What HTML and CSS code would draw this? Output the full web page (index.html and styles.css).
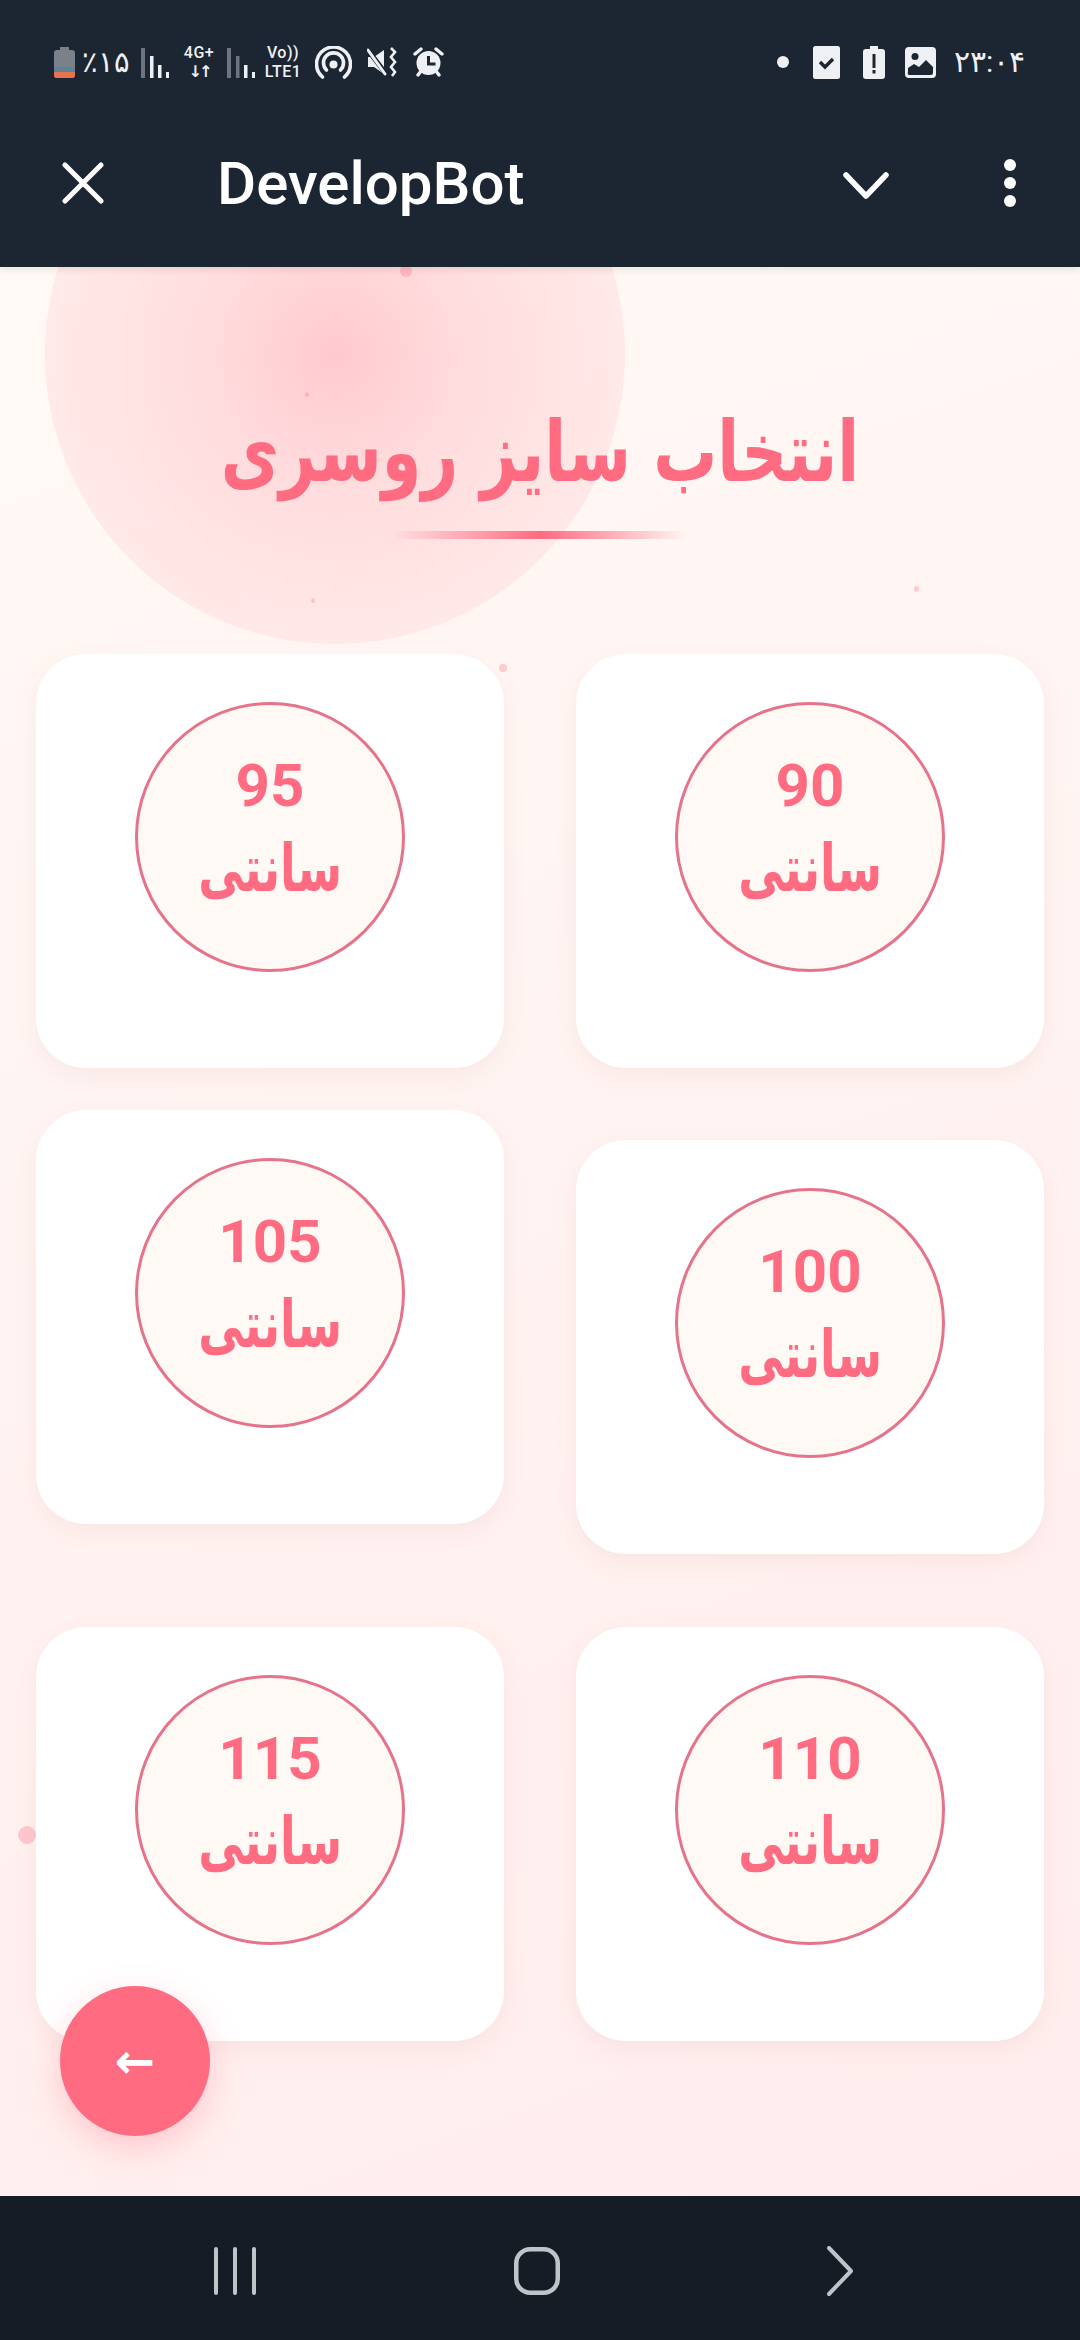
FILE: index.html
```html
<!DOCTYPE html>
<html lang="fa">
<head>
    <meta charset="UTF-8">
    <meta name="viewport" content="width=device-width, initial-scale=1.0">
    <title>DevelopBot</title>
    <link rel="stylesheet" href="styles.css">
</head>
<body>
    <header class="top">
        <div class="status">
            <div class="status-left">
                <svg class="i-batt" width="21" height="31" viewBox="0 0 21 31"><path d="M6 0h9v3h3a3 3 0 0 1 3 3v22a3 3 0 0 1-3 3H3a3 3 0 0 1-3-3V6a3 3 0 0 1 3-3h3z" fill="#7b818b"/><path d="M0 25h21v3a3 3 0 0 1-3 3H3a3 3 0 0 1-3-3z" fill="#e8744f"/><rect y="20" width="21" height="5" fill="#5f8296"/></svg>
                <span class="pct" dir="ltr">٪۱۵</span>
                <svg class="i-sig" width="28" height="31" viewBox="0 0 28 31"><rect x="0" y="1" width="4" height="30" fill="#6f7580"/><rect x="9" y="9" width="3.500" height="22" fill="#eef0f4"/><rect x="17" y="18" width="3.500" height="13" fill="#eef0f4"/><rect x="25" y="25" width="3.500" height="6" fill="#eef0f4"/></svg>
                <div class="net">
                    <span>4G+</span>
                    <span class="arrows">↓↑</span>
                </div>
                <svg class="i-sig2" width="28" height="31" viewBox="0 0 28 31"><rect x="0" y="1" width="4" height="30" fill="#6f7580"/><rect x="9" y="9" width="3.500" height="22" fill="#6f7580"/><rect x="17" y="18" width="3.500" height="13" fill="#eef0f4"/><rect x="25" y="25" width="3.500" height="6" fill="#eef0f4"/></svg>
                <div class="net volte">
                    <span>Vo))</span>
                    <span>LTE1</span>
                </div>
                <svg class="i-hot" width="37" height="33" viewBox="0 0 37 33" fill="none" stroke="#eef0f4" stroke-width="3.600" stroke-linecap="round"><path d="M7.500 31A17 17 0 1 1 29.500 31"/><path d="M11.500 24A10 10 0 1 1 25.500 24"/><circle cx="18.500" cy="18.500" r="4" fill="#eef0f4" stroke="none"/></svg>
                <svg class="i-mute" width="31" height="30" viewBox="0 0 31 30"><path d="M1 10h6L17 3v24L7 20H1z" fill="#eef0f4"/><path d="M0 2l20 26" stroke="#1c2532" stroke-width="5"/><path d="M1 3l17 24" stroke="#eef0f4" stroke-width="3" stroke-linecap="round"/><path d="M24 1l4 4-4 5 4 5-4 5 4 5-3 4" fill="none" stroke="#eef0f4" stroke-width="2.600"/></svg>
                <svg class="i-alarm" width="31" height="30" viewBox="0 0 31 30"><circle cx="15.500" cy="16" r="12" fill="#eef0f4"/><path d="M15.500 9v8h7" fill="none" stroke="#1c2532" stroke-width="3"/><path d="M2 7l6-5M29 7l-6-5M5 28l3-4M26 28l-3-4" stroke="#eef0f4" stroke-width="3.400" stroke-linecap="round"/></svg>
            </div>
            <div class="status-right">
                <span class="dot"></span>
                <svg class="i-check" width="27" height="33" viewBox="0 0 27 33"><rect width="27" height="33" rx="2.500" fill="#eef0f4"/><path d="M7 16l5 5 8-8" fill="none" stroke="#1c2532" stroke-width="3.400"/></svg>
                <svg class="i-alert" width="22" height="33" viewBox="0 0 22 33"><path d="M7 0h8v3h4a3 3 0 0 1 3 3v24a3 3 0 0 1-3 3H3a3 3 0 0 1-3-3V6a3 3 0 0 1 3-3h4z" fill="#eef0f4"/><rect x="9.500" y="8" width="3" height="14" fill="#1c2532"/><rect x="9.500" y="24" width="3" height="3.500" fill="#1c2532"/></svg>
                <svg class="i-img" width="31" height="31" viewBox="0 0 31 31"><rect width="31" height="31" rx="4" fill="#eef0f4"/><circle cx="10" cy="9.500" r="3.500" fill="#1c2532"/><path d="M3 25v-4l6-4 5 3 7-7 7 7v6a2 2 0 0 1-2 2H5a2 2 0 0 1-2-3z" fill="#1c2532"/></svg>
                <span class="clock" dir="ltr">۲۳:۰۴</span>
            </div>
        </div>
        <div class="appbar">
            <svg class="i-close" width="42" height="42" viewBox="0 0 42 42" fill="none" stroke="#fff" stroke-width="5" stroke-linecap="round"><path d="M3 3l36 36M39 3L3 39"/></svg>
            <span class="app-title">DevelopBot</span>
            <svg class="i-down" width="46" height="28" viewBox="0 0 46 28" fill="none" stroke="#fff" stroke-width="5.500" stroke-linecap="round" stroke-linejoin="round"><path d="M3 3l20 21L43 3"/></svg>
            <div class="kebab"><span></span><span></span><span></span></div>
        </div>
    </header>

    <main class="page">
        <div class="blob"></div>
        <span class="speck s1"></span>
        <span class="speck s2"></span>
        <span class="speck s3"></span>
        <span class="speck s4"></span>
        <span class="speck s5"></span>
        <span class="speck s6"></span>

        <h1 class="heading">انتخاب سایز روسری</h1>
        <div class="rule"></div>

        <div class="sizes">
            <div class="col col-a">
                <div class="card"><div class="ring"><span class="num">95</span><span class="unit">سانتی</span></div></div>
                <div class="card"><div class="ring"><span class="num">105</span><span class="unit">سانتی</span></div></div>
                <div class="card"><div class="ring"><span class="num">115</span><span class="unit">سانتی</span></div></div>
            </div>
            <div class="col col-b">
                <div class="card"><div class="ring"><span class="num">90</span><span class="unit">سانتی</span></div></div>
                <div class="card"><div class="ring"><span class="num">100</span><span class="unit">سانتی</span></div></div>
                <div class="card"><div class="ring"><span class="num">110</span><span class="unit">سانتی</span></div></div>
            </div>
        </div>

        <button class="back" type="button">←</button>
    </main>

    <nav class="navbar">
        <svg width="42" height="48" viewBox="0 0 42 48" stroke="#c0c4c9" stroke-width="4" stroke-linecap="round"><path d="M2 2v44M21 2v44M40 2v44"/></svg>
        <svg width="46" height="48" viewBox="0 0 46 48" fill="none" stroke="#c0c4c9" stroke-width="4.500"><rect x="2.250" y="2.250" width="41.500" height="43.500" rx="14"/></svg>
        <svg width="26" height="50" viewBox="0 0 26 50" fill="none" stroke="#c0c4c9" stroke-width="4" stroke-linecap="round" stroke-linejoin="round"><path d="M2 2l22 23L2 48"/></svg>
    </nav>
</body>
</html>
```

FILE: styles.css
```css
* {
    box-sizing: border-box;
}
html, body {
    margin: 0;
    padding: 0;
}
body {
    width: 1080px;
    height: 2340px;
    display: flex;
    flex-direction: column;
    overflow: hidden;
    font-family: Roboto, "Noto Sans", sans-serif;
    background-color: #151c26;
}

/* top bars */
.top {
    height: 267px;
    flex: none;
    background-color: #1c2532;
    color: #fff;
    position: relative;
    z-index: 2;
    box-shadow: 0 2px 8px rgba(0, 0, 0, 0.1);
}
.status {
    height: 124px;
    display: flex;
    justify-content: space-between;
    align-items: center;
    padding: 0 54px 0 54px;
    color: #eef0f4;
}
.status-left, .status-right {
    display: flex;
    align-items: center;
}
.pct {
    width: 44px;
    margin-left: 7px;
    font-size: 29px;
    line-height: 32px;
    white-space: nowrap;
}
.i-sig { margin-left: 15px; }
.net {
    width: 34px;
    margin-left: 13px;
    display: flex;
    flex-direction: column;
    align-items: center;
    font-size: 16px;
    font-weight: 500;
    line-height: 19px;
    letter-spacing: 0.5px;
    white-space: nowrap;
}
.arrows {
    font-family: "DejaVu Sans", sans-serif;
    font-size: 16px;
    font-weight: 700;
    letter-spacing: -3px;
}
.i-sig2 { margin-left: 11px; }
.volte {
    width: 38px;
    margin-left: 9px;
}
.i-hot { margin-left: 13px; }
.i-mute { margin-left: 15px; }
.i-alarm { margin-left: 15px; }
.dot {
    width: 12px;
    height: 12px;
    border-radius: 50%;
    background-color: #eef0f4;
}
.i-check { margin-left: 24px; }
.i-alert { margin-left: 23px; }
.i-img { margin-left: 20px; }
.clock {
    width: 72px;
    margin-left: 18px;
    font-size: 30px;
    line-height: 32px;
    white-space: nowrap;
}
.appbar {
    height: 118px;
    display: flex;
    align-items: center;
    padding: 0 64px 0 62px;
}
.app-title {
    margin-left: 113px;
    font-size: 60px;
    font-weight: 500;
}
.i-down {
    margin-left: auto;
    margin-top: 6px;
}
.kebab {
    margin-left: 115px;
    display: flex;
    flex-direction: column;
    gap: 6px;
}
.kebab span {
    width: 12px;
    height: 12px;
    border-radius: 50%;
    background-color: #fff;
}

/* main area */
.page {
    flex: 1;
    position: relative;
    overflow: hidden;
    padding: 0 36px;
    background: linear-gradient(160deg, #fff9f5 0%, #fff3f1 50%, #ffeded 100%);
}
.blob {
    position: absolute;
    left: 45px;
    top: -203px;
    width: 580px;
    height: 580px;
    border-radius: 50%;
    background: radial-gradient(circle, rgba(255, 107, 129, 0.33) 0%, rgba(255, 107, 129, 0.2) 30%, rgba(255, 107, 129, 0.1) 70%, rgba(255, 107, 129, 0.05) 100%);
}
.speck {
    position: absolute;
    border-radius: 50%;
    background-color: rgba(255, 107, 129, 0.3);
}
.s1 { left: 400px; top: -2px; width: 12px; height: 12px; }
.s2 { left: 18px; top: 1559px; width: 18px; height: 18px; }
.s3 { left: 499px; top: 397px; width: 8px; height: 8px; }
.s4 { left: 914px; top: 319px; width: 5px; height: 6px; }
.s5 { left: 305px; top: 125px; width: 4px; height: 5px; }
.s6 { left: 311px; top: 331px; width: 4px; height: 5px; }

.heading {
    position: relative;
    margin: 0;
    padding-top: 140px;
    height: 258px;
    text-align: center;
    color: #ff6b81;
    font-family: "DejaVu Sans", sans-serif;
    font-size: 84px;
    font-weight: 700;
    line-height: 90px;
    transform: scaleX(0.76);
    white-space: nowrap;
}
.rule {
    position: relative;
    width: 296px;
    height: 8px;
    margin: 6px auto 0;
    border-radius: 4px;
    background: linear-gradient(90deg, rgba(255, 107, 129, 0), #ff6b81, rgba(255, 107, 129, 0));
}

.sizes {
    position: relative;
    margin-top: 115px;
    display: flex;
    justify-content: space-between;
}
.col {
    width: 468px;
    display: flex;
    flex-direction: column;
}
.col-a .card:nth-child(2) { margin-top: 42px; }
.col-a .card:nth-child(3) { margin-top: 103px; }
.col-b .card:nth-child(2) { margin-top: 72px; }
.col-b .card:nth-child(3) { margin-top: 73px; }
.card {
    height: 414px;
    padding-top: 48px;
    display: flex;
    justify-content: center;
    align-items: flex-start;
    border-radius: 50px;
    background-color: #fff;
    box-shadow: 0 8px 24px rgba(160, 90, 90, 0.08);
}
.ring {
    width: 270px;
    height: 270px;
    display: flex;
    flex-direction: column;
    align-items: center;
    padding-top: 45px;
    border: 3px solid #e5748b;
    border-radius: 50%;
    background-color: #fff9f6;
    color: #ff6b81;
    font-weight: 700;
}
.num {
    font-size: 60px;
    line-height: 72px;
}
.unit {
    margin-top: 2px;
    font-family: "DejaVu Sans", sans-serif;
    font-size: 66px;
    line-height: 90px;
    transform: scaleX(0.69);
}
.back {
    position: absolute;
    left: 60px;
    top: 1719px;
    width: 150px;
    height: 150px;
    padding: 0;
    border: none;
    border-radius: 50%;
    background-color: #ff6b81;
    color: #fff;
    font-family: "DejaVu Sans", sans-serif;
    font-size: 48px;
    font-weight: 700;
    box-shadow: 0 12px 34px rgba(255, 107, 129, 0.3);
}

/* system nav */
.navbar {
    height: 144px;
    flex: none;
    display: flex;
    align-items: center;
    padding: 6px 0 0 214px;
    background-color: #151c26;
}
.navbar svg:nth-child(2) { margin-left: 258px; }
.navbar svg:nth-child(3) { margin-left: 267px; }
```
